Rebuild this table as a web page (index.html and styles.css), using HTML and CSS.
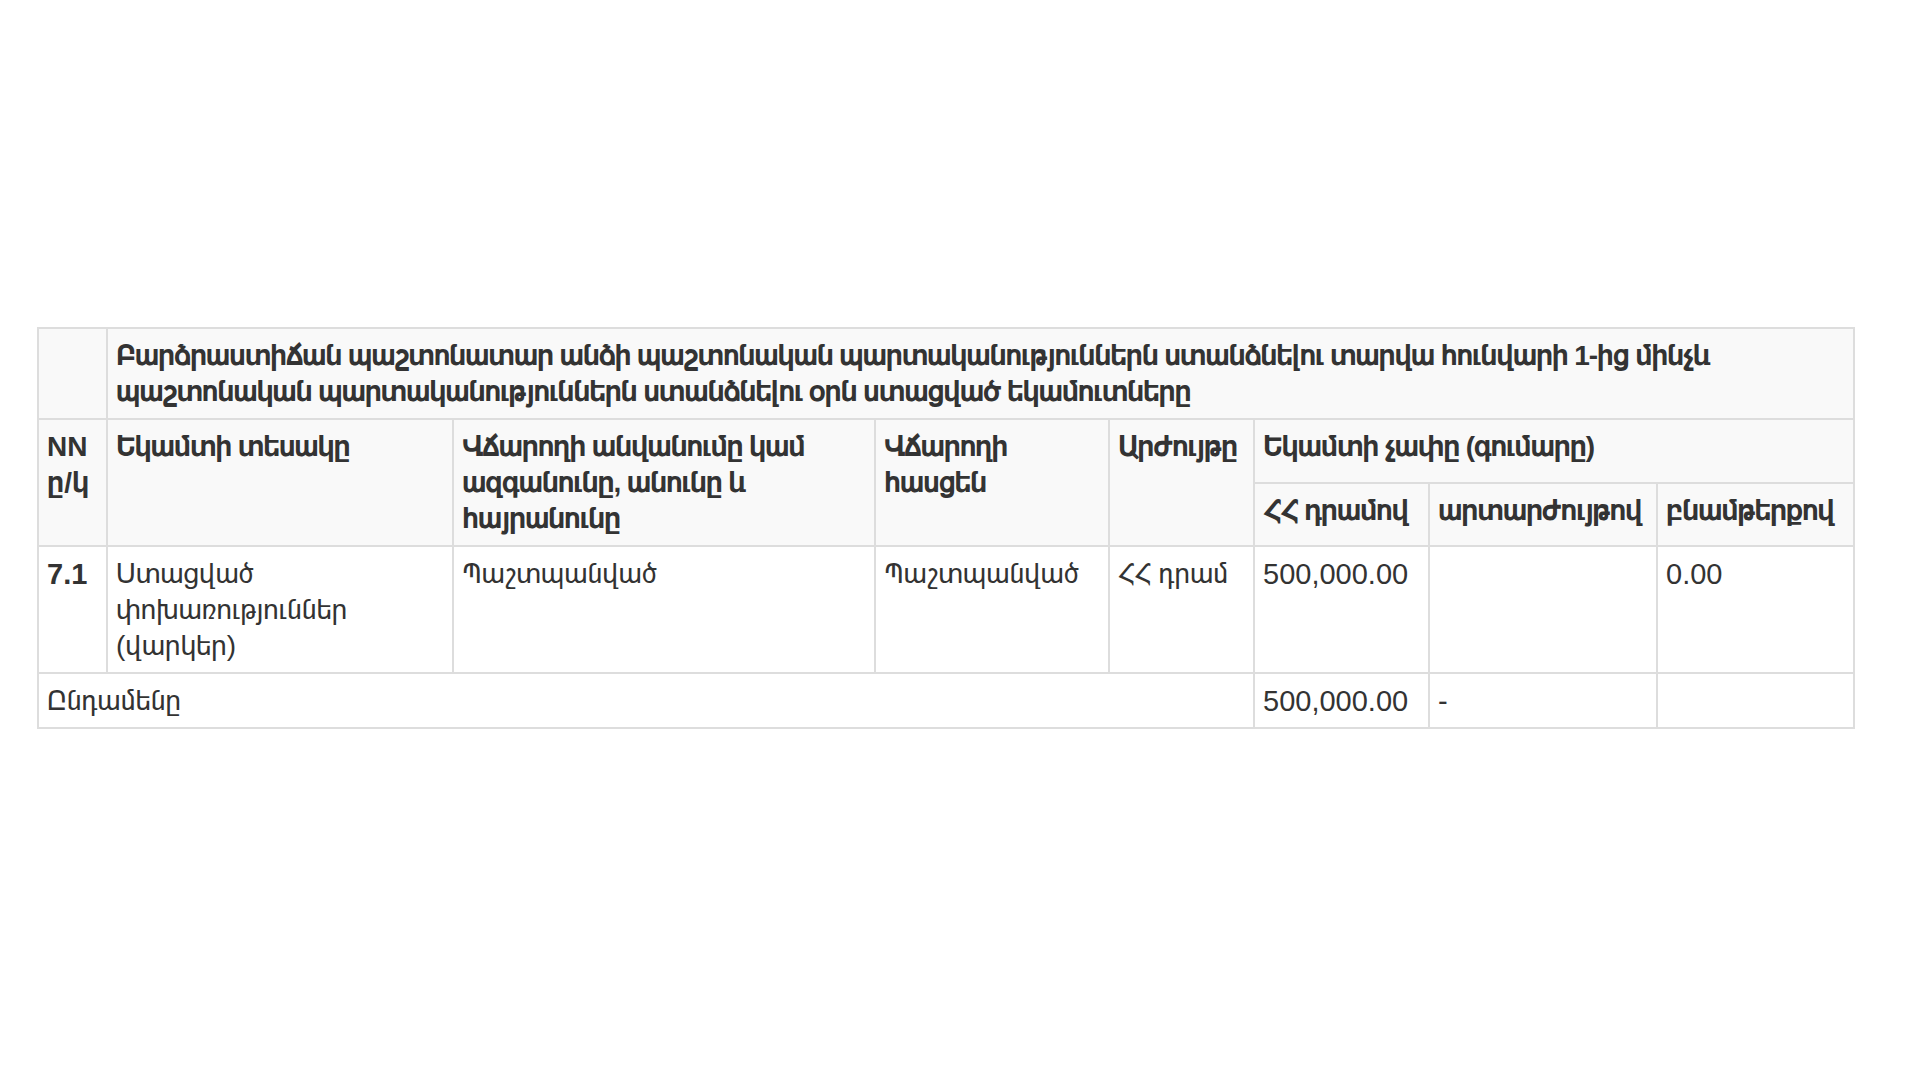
FILE: index.html
```html
<!DOCTYPE html>
<html lang="hy">
<head>
<meta charset="utf-8">
<title>Եկամուտներ</title>
<link rel="stylesheet" href="styles.css">
</head>
<body>
<main class="page">
  <table class="income">
    <colgroup>
      <col class="c-nn">
      <col class="c-type">
      <col class="c-payer">
      <col class="c-addr">
      <col class="c-cur">
      <col class="c-amd">
      <col class="c-fx">
      <col class="c-kind">
    </colgroup>
    <thead>
      <tr>
        <th></th>
        <th colspan="7">Բարձրաստիճան պաշտոնատար անձի պաշտոնական պարտականություններն ստանձնելու տարվա հունվարի 1-ից մինչև պաշտոնական պարտականություններն ստանձնելու օրն ստացված եկամուտները</th>
      </tr>
      <tr>
        <th rowspan="2" class="latin">NN ը/կ</th>
        <th rowspan="2">Եկամտի տեսակը</th>
        <th rowspan="2">Վճարողի անվանումը կամ ազգանունը, անունը և հայրանունը</th>
        <th rowspan="2">Վճարողի հասցեն</th>
        <th rowspan="2">Արժույթը</th>
        <th colspan="3">Եկամտի չափը (գումարը)</th>
      </tr>
      <tr>
        <th>ՀՀ դրամով</th>
        <th>արտարժույթով</th>
        <th>բնամթերքով</th>
      </tr>
    </thead>
    <tbody>
      <tr>
        <td class="num strong">7.1</td>
        <td>Ստացված փոխառություններ (վարկեր)</td>
        <td>Պաշտպանված</td>
        <td>Պաշտպանված</td>
        <td>ՀՀ դրամ</td>
        <td class="num">500,000.00</td>
        <td></td>
        <td class="num">0.00</td>
      </tr>
      <tr>
        <td colspan="5">Ընդամենը</td>
        <td class="num">500,000.00</td>
        <td class="num">-</td>
        <td></td>
      </tr>
    </tbody>
  </table>
</main>
</body>
</html>
```
FILE: styles.css
```css
html, body {
  margin: 0;
  padding: 0;
  background: #ffffff;
}

.page {
  padding: 327px 0 0 37px;
}

.income {
  border-collapse: collapse;
  table-layout: fixed;
  width: 1816px;
  font-family: "Liberation Sans", "FreeSans", sans-serif;
  font-size: 28px;
  line-height: 36px;
  color: #333333;
}

.c-nn { width: 69px; }
.c-type { width: 346px; }
.c-payer { width: 422px; }
.c-addr { width: 234px; }
.c-cur { width: 145px; }
.c-amd { width: 175px; }
.c-fx { width: 228px; }
.c-kind { width: 197px; }

.income th,
.income td {
  border: 2px solid #dddddd;
  padding: 9px 8px 8px;
  text-align: left;
  vertical-align: top;
}

.income thead th {
  background: #f9f9f9;
  font-weight: bold;
  letter-spacing: -1.2px;
}

.income thead th.latin {
  letter-spacing: 0;
}

.income td {
  background: #ffffff;
  font-weight: normal;
}

.income .num {
  font-size: 29px;
}

.income td.strong {
  font-weight: bold;
}
```
